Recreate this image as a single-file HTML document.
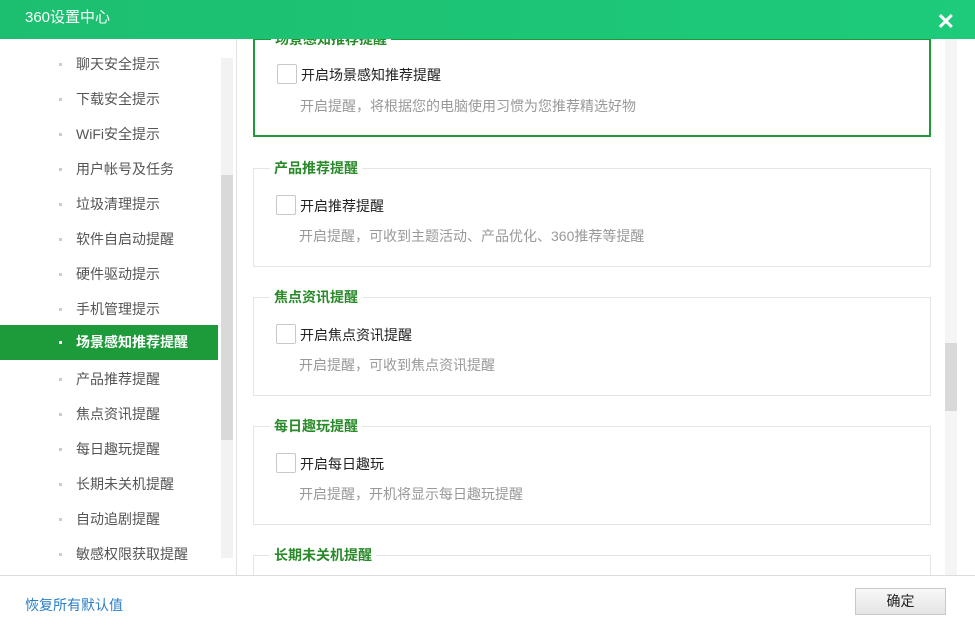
<!DOCTYPE html>
<html><head><meta charset="utf-8"><style>
*{margin:0;padding:0;box-sizing:border-box}
body{width:975px;height:625px;overflow:hidden;background:#fff;font-family:"Liberation Sans","Noto Sans CJK SC",sans-serif;position:relative}
.title{position:absolute;left:0;top:0;width:975px;height:39px;background:linear-gradient(90deg,#1cbf6f,#1dcb7b);color:#fff;font-size:15px;line-height:36px;padding-left:25px;z-index:2}
.x{position:absolute;right:20px;top:4px;color:#fff;font-size:22px;font-weight:bold}
.side{position:absolute;left:0;top:39px;width:237px;height:536px;border-right:1px solid #e2e2e2;overflow:hidden}
.item{position:absolute;left:0;width:218px;height:35px;line-height:35px;font-size:14px;color:#555;padding-left:76px}
.item:before{content:"";position:absolute;left:59px;top:16px;width:3px;height:3px;background:#ccc}
.item.on{background:#1d9b3a;color:#fff;font-weight:bold}
.item.on:before{background:#fff}
.strack{position:absolute;left:221px;top:19px;width:12px;height:500px;background:#f2f2f2}
.sthumb{position:absolute;left:221px;top:136px;width:12px;height:265px;background:#d9d9d9}
.box{position:absolute;left:253px;width:678px;border:1px solid #e5e5e5}
.box.hl{border:2px solid #1d9b3a}
.lg{position:absolute;left:16px;top:-10px;background:#fff;padding:0 4px;color:#2a8a2a;font-weight:bold;font-size:14px;line-height:18px}
.cb{position:absolute;left:22px;width:20px;height:20px;border:1px solid #c8c8c8;border-radius:2px}
.lb{position:absolute;left:46px;font-size:14px;color:#222}
.ds{position:absolute;left:45px;font-size:14px;color:#999}
.rtrack{position:absolute;left:945px;top:39px;width:12px;height:536px;background:#f5f5f5}
.rthumb{position:absolute;left:945px;top:343px;width:12px;height:68px;background:#d9d9d9}
.foot{position:absolute;left:0;top:575px;width:975px;height:50px;border-top:1px solid #dcdcdc;background:#fff}
.link{position:absolute;left:25px;top:19px;color:#2a7fc6;font-size:14px}
.btn{position:absolute;left:855px;top:12px;width:91px;height:27px;border:1px solid #c8c8c8;background:linear-gradient(#f8f8f8,#e4e4e4);font-size:14px;text-align:center;line-height:25px;color:#222}
</style></head><body>
<div class="title">360设置中心<span class="x">✕</span></div>
<div class="side">
<div class="strack"></div><div class="sthumb"></div>
<div class="item" style="top:8px">聊天安全提示</div>
<div class="item" style="top:43px">下载安全提示</div>
<div class="item" style="top:78px">WiFi安全提示</div>
<div class="item" style="top:113px">用户帐号及任务</div>
<div class="item" style="top:148px">垃圾清理提示</div>
<div class="item" style="top:183px">软件自启动提醒</div>
<div class="item" style="top:218px">硬件驱动提示</div>
<div class="item" style="top:253px">手机管理提示</div>
<div class="item on" style="top:286px">场景感知推荐提醒</div>
<div class="item" style="top:323px">产品推荐提醒</div>
<div class="item" style="top:358px">焦点资讯提醒</div>
<div class="item" style="top:393px">每日趣玩提醒</div>
<div class="item" style="top:428px">长期未关机提醒</div>
<div class="item" style="top:463px">自动追剧提醒</div>
<div class="item" style="top:498px">敏感权限获取提醒</div>
</div>
<div style="position:absolute;left:238px;top:39px;width:707px;height:536px;overflow:hidden">
<div class="box hl" style="left:15px;top:-1px;height:99px"><span class="lg" style="top:-10px">场景感知推荐提醒</span><div class="cb" style="top:24px"></div><div class="lb" style="top:25px">开启场景感知推荐提醒</div><div class="ds" style="top:56px">开启提醒，将根据您的电脑使用习惯为您推荐精选好物</div></div>
<div class="box" style="left:15px;top:129px;height:99px"><span class="lg">产品推荐提醒</span><div class="cb" style="top:26px"></div><div class="lb" style="top:27px">开启推荐提醒</div><div class="ds" style="top:57px">开启提醒，可收到主题活动、产品优化、360推荐等提醒</div></div>
<div class="box" style="left:15px;top:258px;height:99px"><span class="lg">焦点资讯提醒</span><div class="cb" style="top:26px"></div><div class="lb" style="top:27px">开启焦点资讯提醒</div><div class="ds" style="top:57px">开启提醒，可收到焦点资讯提醒</div></div>
<div class="box" style="left:15px;top:387px;height:99px"><span class="lg">每日趣玩提醒</span><div class="cb" style="top:26px"></div><div class="lb" style="top:27px">开启每日趣玩</div><div class="ds" style="top:57px">开启提醒，开机将显示每日趣玩提醒</div></div>
<div class="box" style="left:15px;top:516px;height:99px"><span class="lg">长期未关机提醒</span></div>
</div>
<div class="rtrack"></div><div class="rthumb"></div>
<div class="foot"><span class="link">恢复所有默认值</span><div class="btn">确定</div></div>
</body></html>
